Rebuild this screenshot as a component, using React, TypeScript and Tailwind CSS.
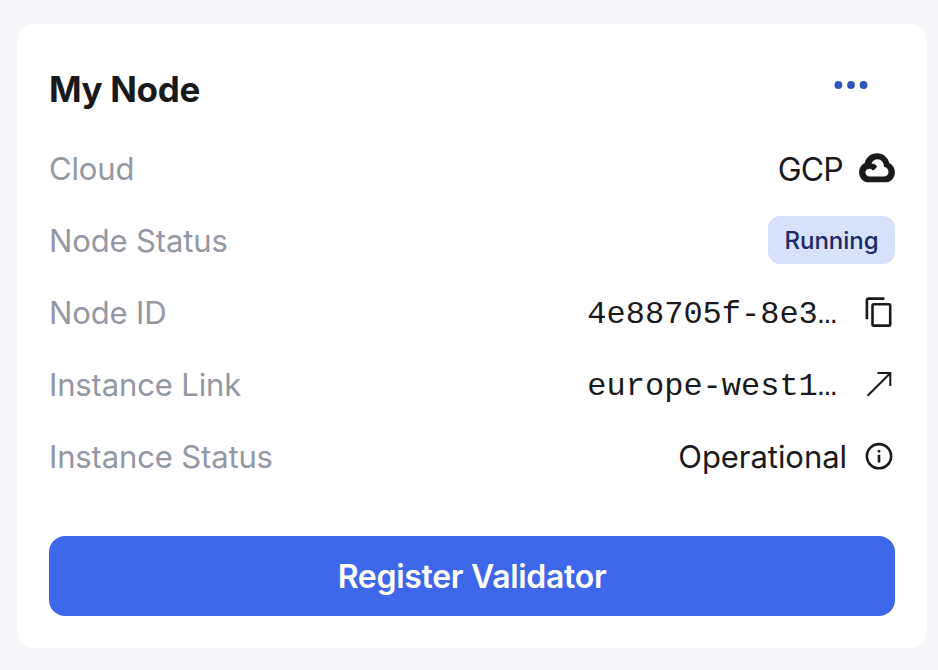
import type { ReactNode } from "react";

function Row({ label, children }: { label: string; children: ReactNode }) {
  return (
    <div className="flex h-12 items-center justify-between">
      <span className="text-[31px] leading-10 tracking-[-0.14px] text-[#9398a3]">{label}</span>
      <div className="flex items-center text-[#1a1a1c]">{children}</div>
    </div>
  );
}

function CloudIcon() {
  return (
    <svg className="ml-4 h-9 w-9" viewBox="0 0 36 36">
      <path
        fill="currentColor"
        fillRule="evenodd"
        d="M18 2.3C11.8 2.3 7.1 6.3 5.7 12.1C2.3 13.9 0.1 17.4 0.1 21.4C0.1 27 4.4 31.3 9.8 31.3H26.2C31.6 31.3 35.9 27 35.9 21.4C35.9 17.4 33.7 13.9 30.3 12.1C28.9 6.3 24.2 2.3 18 2.3ZM12.4 12.6C13.6 9.9 15.6 8.3 18.4 8.3C22.2 8.3 25.2 11.6 24.9 15.8C27.6 16 29.5 18.4 29.5 21C29.5 23.7 27.6 25.4 25.2 25.4H10.7C8.2 25.4 6.4 23.7 6.4 21.4C6.4 19.4 7.8 18.1 9.6 17.9C11.3 17.7 12.6 18.2 13.8 19.5C15.7 18.4 17.2 17.1 18 15.5C16.7 13.3 14.6 12.5 12.4 12.6Z"
      />
    </svg>
  );
}

function CopyIcon() {
  return (
    <svg className="ml-6 h-8 w-8" viewBox="0 0 32 32" fill="none" stroke="currentColor" strokeWidth="2.6">
      <path d="M3.9 22.2V3.5Q3.9 1.6 5.8 1.6H21.4" />
      <rect x="9.5" y="7.2" width="17.7" height="21.4" rx="1.3" />
    </svg>
  );
}

function ArrowIcon() {
  return (
    <svg className="ml-6 h-8 w-8" viewBox="0 0 32 32" fill="none" stroke="currentColor" strokeWidth="2">
      <path d="M4.6 26.8L27.2 4.2M14.5 4.1H27.3V17" />
    </svg>
  );
}

function InfoIcon() {
  return (
    <svg className="ml-4 h-8 w-8" viewBox="0 0 32 32" fill="none" stroke="currentColor" strokeWidth="2.6">
      <circle cx="16" cy="15.2" r="12.1" />
      <path d="M16 13.8V21.4M16 9V11.6" />
    </svg>
  );
}

function MonoValue({ children }: { children: ReactNode }) {
  return (
    <span className="mr-0.5 pt-[3px] font-['Liberation_Mono',monospace] text-[32px] leading-10">
      {children}
    </span>
  );
}

export default function App() {
  return (
    <main className="h-[670px] w-[938px] bg-[#f5f7fb] pt-6 pl-[17px] font-['Inter',sans-serif]">
      <section className="h-[624px] w-[910px] rounded-2xl bg-white px-8 pt-8">
        <header className="flex h-[65px] items-start justify-between pr-[27px]">
          <h1 className="mt-[9px] text-[35px] leading-12 font-bold tracking-[-0.35px] text-[#1a1a1c]">My Node</h1>
          <button aria-label="More options" className="mt-[25px]">
            <svg className="h-2 w-[34px]" viewBox="0 0 34 8" fill="#3156bd">
              <circle cx="4.4" cy="4" r="3.9" />
              <circle cx="17" cy="4" r="3.9" />
              <circle cx="29.6" cy="4" r="3.9" />
            </svg>
          </button>
        </header>
        <div className="mt-6 flex flex-col gap-6">
          <Row label="Cloud">
            <span className="pt-0.5 text-[32px] leading-10 tracking-[-0.8px]">GCP</span>
            <CloudIcon />
          </Row>
          <Row label="Node Status">
            <span className="mb-0.5 flex h-12 w-[127px] items-center justify-center rounded-xl bg-[#d7e1fa] pt-0.5 text-2xl font-medium text-[#1b2a68]">
              Running
            </span>
          </Row>
          <Row label="Node ID">
            <MonoValue>4e88705f-8e3…</MonoValue>
            <CopyIcon />
          </Row>
          <Row label="Instance Link">
            <MonoValue>europe-west1…</MonoValue>
            <ArrowIcon />
          </Row>
          <Row label="Instance Status">
            <span className="text-[31px] leading-10 tracking-[-0.05px]">Operational</span>
            <InfoIcon />
          </Row>
        </div>
        <button className="mt-[55px] h-20 w-full rounded-2xl bg-[#3e68e9] pt-0.5 text-[32px] font-semibold tracking-[-0.3px] text-white">
          Register Validator
        </button>
      </section>
    </main>
  );
}
